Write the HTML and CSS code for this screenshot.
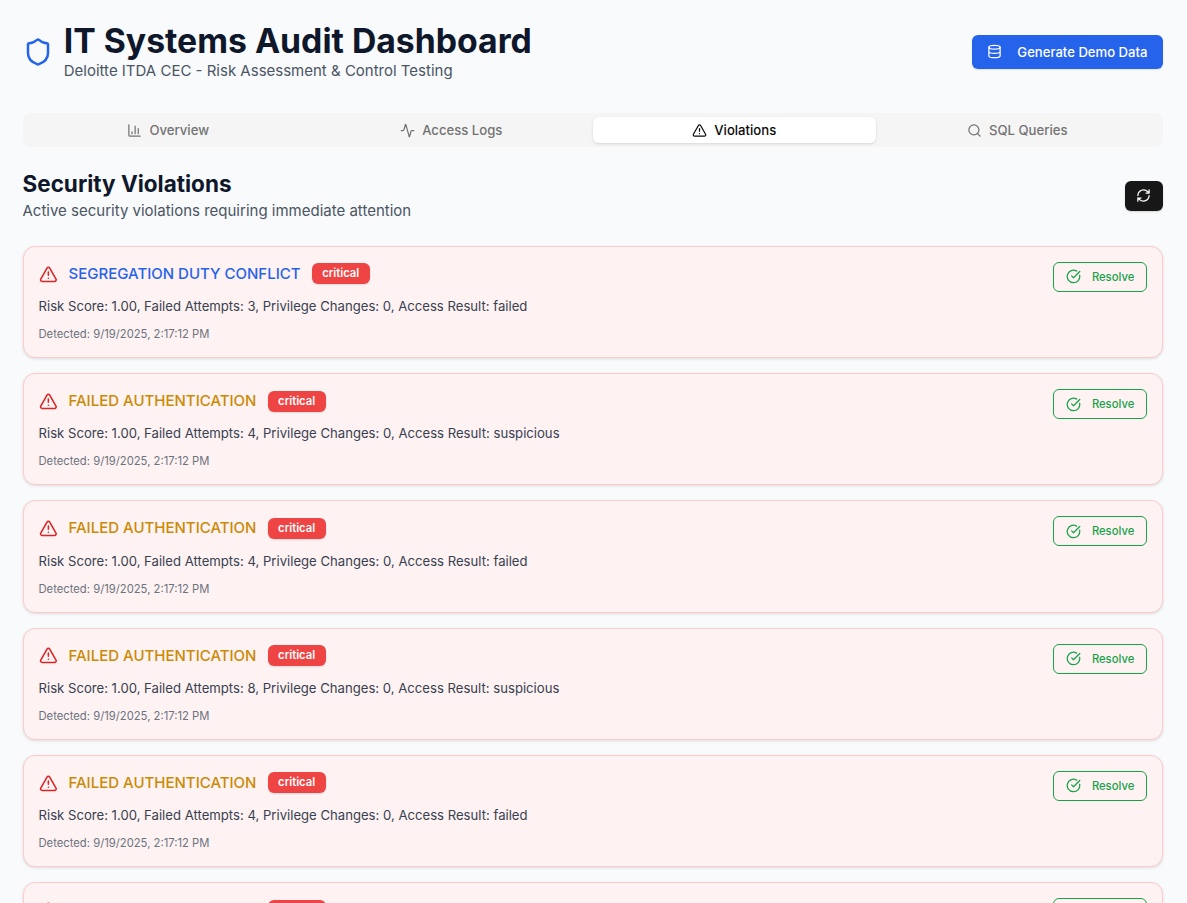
FILE: index.html
```html
<!DOCTYPE html>
<html lang="en">
<head>
<meta charset="utf-8">
<title>IT Systems Audit Dashboard</title>
<link rel="stylesheet" href="styles.css">
</head>
<body>
<svg class="sprite" aria-hidden="true">
  <symbol id="shield" viewBox="0 0 24 24"><path d="M20 13c0 5-3.5 7.5-7.66 8.95a1 1 0 0 1-.67-.01C7.5 20.5 4 18 4 13V6a1 1 0 0 1 1-1c2 0 4.500-1.200 6.240-2.720a1.170 1.170 0 0 1 1.520 0C14.510 3.810 17 5 19 5a1 1 0 0 1 1 1z"/></symbol>
  <symbol id="database" viewBox="0 0 24 24"><ellipse cx="12" cy="5" rx="9" ry="3"/><path d="M3 5v14a9 3 0 0 0 18 0V5M3 12a9 3 0 0 0 18 0"/></symbol>
  <symbol id="chart" viewBox="0 0 24 24"><path d="M3 3v16a2 2 0 0 0 2 2h16M18 17V9M13 17V5M8 17v-3"/></symbol>
  <symbol id="activity" viewBox="0 0 24 24"><path d="M22 12h-2.480a2 2 0 0 0-1.930 1.460l-2.350 8.360a.25.25 0 0 1-.48 0L9.240 2.180a.25.25 0 0 0-.48 0l-2.350 8.360A2 2 0 0 1 4.490 12H2"/></symbol>
  <symbol id="alert" viewBox="0 0 24 24"><path d="m21.730 18-8-14a2 2 0 0 0-3.480 0l-8 14A2 2 0 0 0 4 21h16a2 2 0 0 0 1.730-3M12 9v4M12 17h.01"/></symbol>
  <symbol id="search" viewBox="0 0 24 24"><circle cx="11" cy="11" r="8"/><path d="m21 21-4.300-4.300"/></symbol>
  <symbol id="refresh" viewBox="0 0 24 24"><path d="M3 12a9 9 0 0 1 9-9 9.750 9.750 0 0 1 6.740 2.740L21 8M21 3v5h-5M21 12a9 9 0 0 1-9 9 9.750 9.750 0 0 1-6.740-2.740L3 16M8 16H3v5"/></symbol>
  <symbol id="check" viewBox="0 0 24 24"><path d="M21.801 10A10 10 0 1 1 17 3.335M9 11l3 3L22 4"/></symbol>
</svg>
<div class="page">
  <header class="header">
    <div class="brand">
      <svg class="icon brand-icon"><use href="#shield"/></svg>
      <div>
        <h1 class="title">IT Systems Audit Dashboard</h1>
        <p class="subtitle">Deloitte ITDA CEC - Risk Assessment &amp; Control Testing</p>
      </div>
    </div>
    <button class="generate"><svg class="icon"><use href="#database"/></svg><span>Generate Demo Data</span></button>
  </header>

  <nav class="tabs">
    <button class="tab"><svg class="icon"><use href="#chart"/></svg><span>Overview</span></button>
    <button class="tab"><svg class="icon"><use href="#activity"/></svg><span>Access Logs</span></button>
    <button class="tab active"><svg class="icon"><use href="#alert"/></svg><span>Violations</span></button>
    <button class="tab"><svg class="icon"><use href="#search"/></svg><span>SQL Queries</span></button>
  </nav>

  <main>
    <div class="section-head">
      <div>
        <h2 class="section-title">Security Violations</h2>
        <p class="section-subtitle">Active security violations requiring immediate attention</p>
      </div>
      <button class="refresh" aria-label="Refresh"><svg class="icon"><use href="#refresh"/></svg></button>
    </div>

    <div class="list">
      <article class="card">
        <div>
          <div class="card-head"><svg class="icon alert-icon"><use href="#alert"/></svg><h3 class="kind segregation">SEGREGATION DUTY CONFLICT</h3><span class="badge">critical</span></div>
          <p class="detail">Risk Score: 1.00, Failed Attempts: 3, Privilege Changes: 0, Access Result: failed</p>
          <p class="detected">Detected: 9/19/2025, 2:17:12 PM</p>
        </div>
        <button class="resolve"><svg class="icon"><use href="#check"/></svg><span>Resolve</span></button>
      </article>
      <article class="card">
        <div>
          <div class="card-head"><svg class="icon alert-icon"><use href="#alert"/></svg><h3 class="kind">FAILED AUTHENTICATION</h3><span class="badge">critical</span></div>
          <p class="detail">Risk Score: 1.00, Failed Attempts: 4, Privilege Changes: 0, Access Result: suspicious</p>
          <p class="detected">Detected: 9/19/2025, 2:17:12 PM</p>
        </div>
        <button class="resolve"><svg class="icon"><use href="#check"/></svg><span>Resolve</span></button>
      </article>
      <article class="card">
        <div>
          <div class="card-head"><svg class="icon alert-icon"><use href="#alert"/></svg><h3 class="kind">FAILED AUTHENTICATION</h3><span class="badge">critical</span></div>
          <p class="detail">Risk Score: 1.00, Failed Attempts: 4, Privilege Changes: 0, Access Result: failed</p>
          <p class="detected">Detected: 9/19/2025, 2:17:12 PM</p>
        </div>
        <button class="resolve"><svg class="icon"><use href="#check"/></svg><span>Resolve</span></button>
      </article>
      <article class="card">
        <div>
          <div class="card-head"><svg class="icon alert-icon"><use href="#alert"/></svg><h3 class="kind">FAILED AUTHENTICATION</h3><span class="badge">critical</span></div>
          <p class="detail">Risk Score: 1.00, Failed Attempts: 8, Privilege Changes: 0, Access Result: suspicious</p>
          <p class="detected">Detected: 9/19/2025, 2:17:12 PM</p>
        </div>
        <button class="resolve"><svg class="icon"><use href="#check"/></svg><span>Resolve</span></button>
      </article>
      <article class="card">
        <div>
          <div class="card-head"><svg class="icon alert-icon"><use href="#alert"/></svg><h3 class="kind">FAILED AUTHENTICATION</h3><span class="badge">critical</span></div>
          <p class="detail">Risk Score: 1.00, Failed Attempts: 4, Privilege Changes: 0, Access Result: failed</p>
          <p class="detected">Detected: 9/19/2025, 2:17:12 PM</p>
        </div>
        <button class="resolve"><svg class="icon"><use href="#check"/></svg><span>Resolve</span></button>
      </article>
      <article class="card">
        <div>
          <div class="card-head"><svg class="icon alert-icon"><use href="#alert"/></svg><h3 class="kind"></h3><span class="badge badge-empty"></span></div>
        </div>
        <button class="resolve resolve-empty" aria-label="Resolve"></button>
      </article>
    </div>
  </main>
</div>
</body>
</html>
```
FILE: styles.css
```css
* { box-sizing: border-box; }
body, h1, h2, h3, p { margin: 0; }
body {
  height: 903px;
  overflow: hidden;
  background: #f8fafc;
  color: #0f172a;
  font-family: Inter, "Liberation Sans", sans-serif;
}
button { border: 0; padding: 0; background: none; font: inherit; color: inherit; }
.sprite { display: none; }
.icon {
  display: block;
  flex: none;
  width: 15px;
  height: 15px;
  fill: none;
  stroke: currentColor;
  stroke-width: 2;
  stroke-linecap: round;
  stroke-linejoin: round;
}
.page { height: 903px; overflow: hidden; padding: 22.5px 24.5px 0 22.5px; }
.header { display: flex; align-items: center; justify-content: space-between; height: 58.5px; }
.brand { display: flex; align-items: center; gap: 11.25px; }
.brand-icon { width: 30px; height: 30px; color: #2563eb; }
.title { font-size: 33.75px; line-height: 37.5px; font-weight: 700; }
.subtitle { margin: 1px 0 -1px; font-size: 15px; line-height: 22.5px; color: #4b5563; }
.section-subtitle { font-size: 15px; line-height: 22.5px; color: #4b5563; }
.generate {
  display: flex;
  align-items: center;
  gap: 15px;
  height: 34px;
  padding: 0 15px;
  border-radius: 6px;
  background: #2563eb;
  color: #fff;
  font-size: 13.125px;
  font-weight: 500;
  box-shadow: 0 1px 2px rgb(0 0 0 / .1);
}
.tabs {
  display: grid;
  grid-template-columns: repeat(4, 1fr);
  height: 34px;
  margin-top: 32px;
  padding: 4px;
  border-radius: 8px;
  background: #f5f5f5;
  color: #737373;
}
.tab { display: flex; align-items: center; justify-content: center; gap: 7.5px; font-size: 13.125px; font-weight: 500; border-radius: 6px; }
.tab.active { background: #fff; color: #0a0a0a; box-shadow: 0 1px 3px rgb(0 0 0 / .13); }
.section-head { display: flex; align-items: center; justify-content: space-between; margin-top: 22.5px; height: 52.5px; }
.section-title { margin-bottom: 1.5px; font-size: 22.5px; line-height: 28.5px; font-weight: 700; }
.refresh { display: flex; align-items: center; justify-content: center; width: 38px; height: 30px; border-radius: 6px; background: #171717; color: #fff; box-shadow: 0 1px 2px rgb(0 0 0 / .15); }
.list { display: grid; gap: 15px; margin-top: 23.9px; }
.card {
  display: flex;
  align-items: flex-start;
  justify-content: space-between;
  height: 112.25px;
  padding: 15px;
  border: 1px solid #fecaca;
  border-radius: 12px;
  background: #fef2f2;
  box-shadow: 0 1px 3px rgb(0 0 0 / .12);
}
.card-head { display: flex; align-items: center; gap: 11.25px; height: 23px; }
.alert-icon { width: 18.75px; height: 18.75px; margin-top: 1px; color: #dc2626; }
.kind { margin-top: 1.5px; font-size: 15px; line-height: 22.5px; font-weight: 500; color: #ca8a04; }
.segregation { color: #2563eb; }
.badge { height: 21px; margin-top: 1px; padding: 0 10.375px; border-radius: 6px; background: #ef4444; color: #fff; font-size: 11.25px; line-height: 20px; font-weight: 600; box-shadow: 0 1px 2px rgb(0 0 0 / .12); }
.kind:empty { width: 188px; }
.badge-empty { width: 58px; }
.detail { margin-top: 12.2px; font-size: 13.125px; line-height: 19px; letter-spacing: .01px; color: #374151; }
.detected { margin-top: 10px; font-size: 11.25px; line-height: 16px; color: #6b7280; }
.resolve { display: flex; align-items: center; gap: 11.25px; height: 30px; padding: 0 11.25px; border: 1px solid #16a34a; border-radius: 6px; color: #16a34a; font-size: 11.25px; font-weight: 500; }
.resolve-empty { width: 94px; }
```
